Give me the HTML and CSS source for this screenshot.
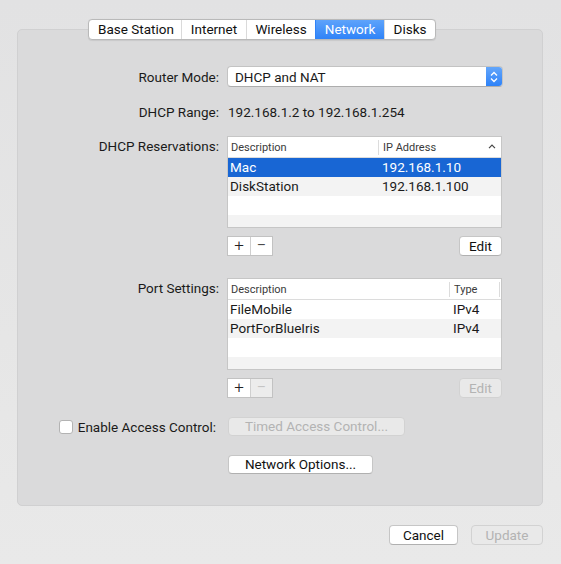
FILE: index.html
```html
<!DOCTYPE html>
<html>
<head>
<meta charset="utf-8">
<link rel="stylesheet" href="styles.css">
</head>
<body>
<div class="window">
  <div class="tabs">
    <div class="tab t-base">Base Station</div>
    <div class="tab t-inet">Internet</div>
    <div class="tab t-wifi">Wireless</div>
    <div class="tab t-net active">Network</div>
    <div class="tab t-disk">Disks</div>
  </div>
  <div class="panel">
    <div class="row r-mode">
      <div class="label">Router Mode:</div>
      <div class="popup">
        <span class="popup-text">DHCP and NAT</span>
        <span class="stepper">
          <svg width="8" height="12" viewBox="0 0 8 12"><path d="M1 4.5 L4 1.5 L7 4.5 M1 7.5 L4 10.5 L7 7.5" fill="none" stroke="#fff" stroke-width="1.3"/></svg>
        </span>
      </div>
    </div>
    <div class="row r-range">
      <div class="label">DHCP Range:</div>
      <div class="value">192.168.1.2 to 192.168.1.254</div>
    </div>
    <div class="row r-table">
      <div class="label label-top">DHCP Reservations:</div>
      <div class="table">
        <div class="thead">
          <div class="th c-desc1">Description</div>
          <div class="th c-ip">IP Address<span class="sort">
            <svg width="8" height="5" viewBox="0 0 8 5"><path d="M1 4.2 L4 1.2 L7 4.2" fill="none" stroke="#444" stroke-width="1.2"/></svg></span></div>
        </div>
        <div class="tbody">
          <div class="tr selected"><div class="td c-desc1">Mac</div><div class="td c-ip">192.168.1.10</div></div>
          <div class="tr alt"><div class="td c-desc1">DiskStation</div><div class="td c-ip">192.168.1.100</div></div>
          <div class="tr"></div>
          <div class="tr alt"></div>
        </div>
      </div>
    </div>
    <div class="row r-btns">
      <div></div>
      <div class="btnbar">
        <div class="pm"><span class="pm-btn">+</span><span class="pm-btn">&minus;</span></div>
        <div class="btn edit">Edit</div>
      </div>
    </div>
    <div class="row r-table r-port">
      <div class="label label-top">Port Settings:</div>
      <div class="table">
        <div class="thead">
          <div class="th c-desc2">Description</div>
          <div class="th c-type">Type</div>
        </div>
        <div class="tbody">
          <div class="tr"><div class="td c-desc2">FileMobile</div><div class="td c-type">IPv4</div></div>
          <div class="tr alt"><div class="td c-desc2">PortForBlueIris</div><div class="td c-type">IPv4</div></div>
          <div class="tr"></div>
          <div class="tr alt"></div>
        </div>
      </div>
    </div>
    <div class="row r-btns">
      <div></div>
      <div class="btnbar">
        <div class="pm"><span class="pm-btn">+</span><span class="pm-btn disabled">&minus;</span></div>
        <div class="btn edit disabled">Edit</div>
      </div>
    </div>
    <div class="row r-access">
      <div class="label access-label"><span class="checkbox"></span>Enable Access Control:</div>
      <div><div class="btn timed disabled">Timed Access Control...</div></div>
    </div>
    <div class="row r-netopt">
      <div></div>
      <div><div class="btn netopt">Network Options...</div></div>
    </div>
  </div>
  <div class="footer">
    <div class="btn cancel">Cancel</div>
    <div class="btn update disabled">Update</div>
  </div>
</div>
</body>
</html>
```

FILE: styles.css
```css
* { box-sizing: border-box; }
html, body { margin: 0; padding: 0; }
body {
  width: 561px;
  height: 564px;
  background: linear-gradient(180deg, #e2e2e3 0%, #e6e6e6 60%, #e9e9e9 100%);
  font-family: Roboto, "Liberation Sans", sans-serif;
  font-size: 13.5px;
  color: #1a1a1a;
  overflow: hidden;
}
.window {
  padding-top: 19px;
}
.tabs {
  position: relative;
  z-index: 1;
  display: flex;
  margin-left: 88px;
  width: max-content;
  height: 21px;
  background: #fff;
  border: 1px solid #b9b9b9;
  border-radius: 4px;
  box-shadow: 0 0.5px 1px rgba(0,0,0,0.08);
  overflow: hidden;
}
.tab {
  text-align: center;
  line-height: 19px;
  border-left: 1px solid #dadada;
  color: #111;
  white-space: nowrap;
}
.t-base { width: 92px; border-left: none; padding-left: 2px; }
.t-inet { width: 65px; }
.t-wifi { width: 69px; }
.t-net { width: 69px; }
.t-disk { width: 51px; }
.tab.active {
  background: linear-gradient(180deg, #5ea3fb 0%, #2f83f8 100%);
  color: #fff;
  border-left-color: #2f83f8;
}
.panel {
  margin: -11px 0 0 17px;
  width: 526px;
  height: 477px;
  background: #dadadb;
  border: 1px solid #d0d0d1;
  border-radius: 5px;
  padding-top: 36px;
}
.row {
  display: grid;
  grid-template-columns: 201px 276px;
  column-gap: 8px;
  align-items: center;
}
.label {
  text-align: right;
  white-space: nowrap;
}
.label-top { align-self: start; padding-top: 1px; line-height: 18px; }
.r-mode { height: 20px; }
.popup {
  height: 21px;
  background: #fff;
  border: 1px solid #c3c3c3;
  border-bottom-color: #adadad;
  border-radius: 4px;
  display: flex;
  align-items: center;
  overflow: hidden;
}
.popup-text { flex: 1; padding-left: 7px; }
.stepper {
  width: 16px;
  height: 100%;
  background: linear-gradient(180deg, #63a6fb 0%, #2e82f8 100%);
  display: flex;
  align-items: center;
  justify-content: center;
}
.r-range { margin-top: 17px; height: 18px; }
.value { padding-left: 1px; }
.r-table { margin-top: 15px; }
.r-port { margin-top: 22px; }
.table {
  width: 275px;
  height: 92px;
  border: 1px solid #c6c6c6;
  background: #fff;
  overflow: hidden;
}
.thead {
  display: flex;
  height: 21px;
  border-bottom: 1px solid #dcdcdc;
  font-size: 11px;
  color: #3a3a3a;
  align-items: center;
}
.th {
  height: 15px;
  line-height: 15px;
  padding-left: 3px;
}
.c-desc1 { width: 150px; }
.c-ip { flex: 1; border-left: 1px solid #dcdcdc; position: relative; }
.th.c-ip { padding-left: 4px; }
.sort { position: absolute; right: 5px; top: 4px; display: flex; }
.c-desc2 { width: 221px; }
.c-type { flex: 1; border-left: 1px solid #dcdcdc; border-right: 1px solid #dcdcdc; margin-right: 1px; }
.th.c-type { padding-left: 4px; }
.tbody { height: 70px; overflow: hidden; }
.tr {
  display: flex;
  height: 19px;
  line-height: 19px;
  background: #fff;
}
.tr.alt { background: #f3f3f3; }
.tr.selected { background: #1866d4; color: #fff; }
.td { padding-left: 2px; border: none; }
.td.c-ip { border: none; padding-left: 4px; }
.td.c-type { border: none; padding-left: 4px; }
.r-btns { margin-top: 8px; }
.btnbar {
  width: 275px;
  display: flex;
  justify-content: space-between;
  align-items: center;
}
.pm {
  display: flex;
  height: 20px;
  border: 1px solid #c2c2c2;
  background: #fff;
}
.pm-btn {
  width: 22px;
  text-align: center;
  line-height: 17px;
  font-size: 17px;
  font-weight: 300;
  color: #222;
}
.pm-btn + .pm-btn { border-left: 1px solid #cfcfcf; width: 22px; }
.pm-btn.disabled { color: #bdbdbd; background: #ececec; }
.btn {
  height: 20px;
  line-height: 18px;
  text-align: center;
  background: #fff;
  border: 1px solid #c6c6c6;
  border-bottom-color: #b0b0b0;
  border-radius: 4px;
  color: #111;
  white-space: nowrap;
}
.btn.disabled {
  background: #e9e9e9;
  color: #b3b3b3;
  border-color: #d2d2d2;
}
.edit { width: 43px; }
.r-access { margin-top: 19px; }
.access-label {
  display: flex;
  align-items: center;
  justify-content: flex-end;
  padding-right: 3px;
}
.checkbox {
  width: 14px;
  height: 14px;
  background: #fff;
  border: 1px solid #b3b3b3;
  border-radius: 3px;
  margin-right: 5px;
}
.timed { width: 177px; margin-left: 1px; height: 19px; line-height: 17px; }
.r-netopt { margin-top: 19px; }
.netopt { width: 145px; margin-left: 1px; height: 19px; line-height: 17px; }
.footer {
  display: flex;
  justify-content: flex-end;
  gap: 13px;
  padding-right: 18px;
  margin-top: 19px;
}
.cancel { width: 69px; }
.update { width: 72px; }
```
